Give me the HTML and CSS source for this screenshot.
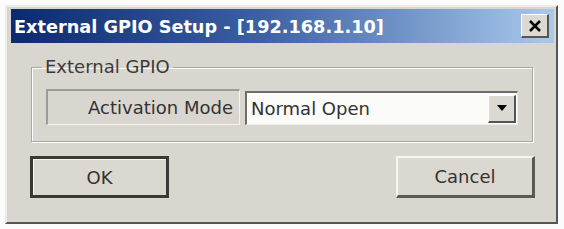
FILE: index.html
```html
<!DOCTYPE html>
<html>
<head>
<meta charset="utf-8">
<link rel="stylesheet" href="styles.css">
</head>
<body>
<div class="window">
  <div class="titlebar">
    <span class="title">External GPIO Setup - [192.168.1.10]</span>
    <span class="close">
      <svg width="14" height="12" viewBox="0 0 14 12"><path d="M2 1 L12 11 M12 1 L2 11" stroke="#000" stroke-width="2.6" fill="none"/></svg>
    </span>
  </div>
  <div class="content">
    <fieldset class="group">
      <legend class="legend">External GPIO</legend>
      <div class="row">
        <div class="label">Activation Mode</div>
        <div class="select">
          <span class="value">Normal Open</span>
          <span class="drop"><svg width="10" height="6" viewBox="0 0 10 6"><path d="M0 0 H10 L5 6 Z" fill="#000"/></svg></span>
        </div>
      </div>
    </fieldset>
    <div class="buttons">
      <div class="btn btn-default">OK</div>
      <div class="btn">Cancel</div>
    </div>
  </div>
</div>
</body>
</html>
```
FILE: styles.css
```css
html, body {
  margin: 0;
  padding: 0;
  background: #fbfbfb;
}
body {
  font-family: "DejaVu Sans", Tahoma, sans-serif;
}
.window {
  margin: 5px 0 0 5px;
  width: 553px;
  height: 219px;
  box-sizing: border-box;
  background: #d9d6d0;
  border-top: 2px solid #ecebe7;
  border-left: 2px solid #ecebe7;
  border-right: 2px solid #555;
  border-bottom: 2px solid #555;
  padding: 2px 2px 0 4px;
  display: flex;
  flex-direction: column;
}
.titlebar {
  height: 34px;
  flex: none;
  background: linear-gradient(to right, #0c2a6e 0%, #3a5fa2 45%, #a9c9ec 100%);
  display: flex;
  align-items: center;
  justify-content: space-between;
  padding: 0 5px 0 3px;
}
.title {
  color: #fff;
  font-weight: bold;
  font-size: 17.7px;
  padding-top: 1px;
}
.close {
  width: 28px;
  height: 24px;
  box-sizing: border-box;
  background: #dcd9d3;
  border-top: 1px solid #fff;
  border-left: 1px solid #fff;
  border-right: 2px solid #555;
  border-bottom: 2px solid #555;
  display: flex;
  align-items: center;
  justify-content: center;
}
.content {
  flex: 1;
  padding: 14px 19px 0 19px;
  display: flex;
  flex-direction: column;
}
.group {
  margin: 0 0 0 1px;
  width: 502px;
  box-sizing: border-box;
  padding: 12px 14px 16px 14px;
  border: 1px solid #a9a7a2;
  box-shadow: 1px 1px 0 #fff, inset 1px 1px 0 #fff;
}
.legend {
  padding: 0 3px;
  margin-left: -4px;
  font-size: 18px;
  color: #3a3a3a;
  line-height: 20px;
}
.row {
  display: flex;
  align-items: flex-end;
  gap: 5px;
}
.label {
  width: 194px;
  height: 36px;
  box-sizing: border-box;
  border-top: 2px solid #9d9b96;
  border-left: 2px solid #9d9b96;
  border-right: 1px solid #f4f3f0;
  border-bottom: 1px solid #f4f3f0;
  display: flex;
  align-items: center;
  justify-content: flex-end;
  padding-right: 6px;
  font-size: 18px;
  color: #333;
}
.select {
  width: 273px;
  height: 34px;
  box-sizing: border-box;
  background: #fbfbfa;
  border-top: 2px solid #6e6c68;
  border-left: 2px solid #6e6c68;
  border-right: 1px solid #eee;
  border-bottom: 1px solid #eee;
  display: flex;
  align-items: center;
  justify-content: space-between;
  padding: 0 1px 0 4px;
}
.value {
  font-size: 18px;
  color: #333;
}
.drop {
  width: 28px;
  height: 28px;
  box-sizing: border-box;
  background: #dcd9d3;
  border-top: 1px solid #fff;
  border-left: 1px solid #fff;
  border-right: 2px solid #555;
  border-bottom: 2px solid #555;
  display: flex;
  align-items: center;
  justify-content: center;
}
.buttons {
  display: flex;
  justify-content: space-between;
  margin-top: 14px;
}
.btn {
  width: 139px;
  height: 42px;
  box-sizing: border-box;
  background: #dbd8d2;
  border-top: 2px solid #f6f5f2;
  border-left: 2px solid #f6f5f2;
  border-right: 3px solid #5a5955;
  border-bottom: 3px solid #5a5955;
  display: flex;
  align-items: center;
  justify-content: center;
  font-size: 18px;
  color: #333;
}
.btn-default {
  border: 3px solid #3a3936;
  box-shadow: inset 1px 1px 0 #f6f5f2;
}
```
